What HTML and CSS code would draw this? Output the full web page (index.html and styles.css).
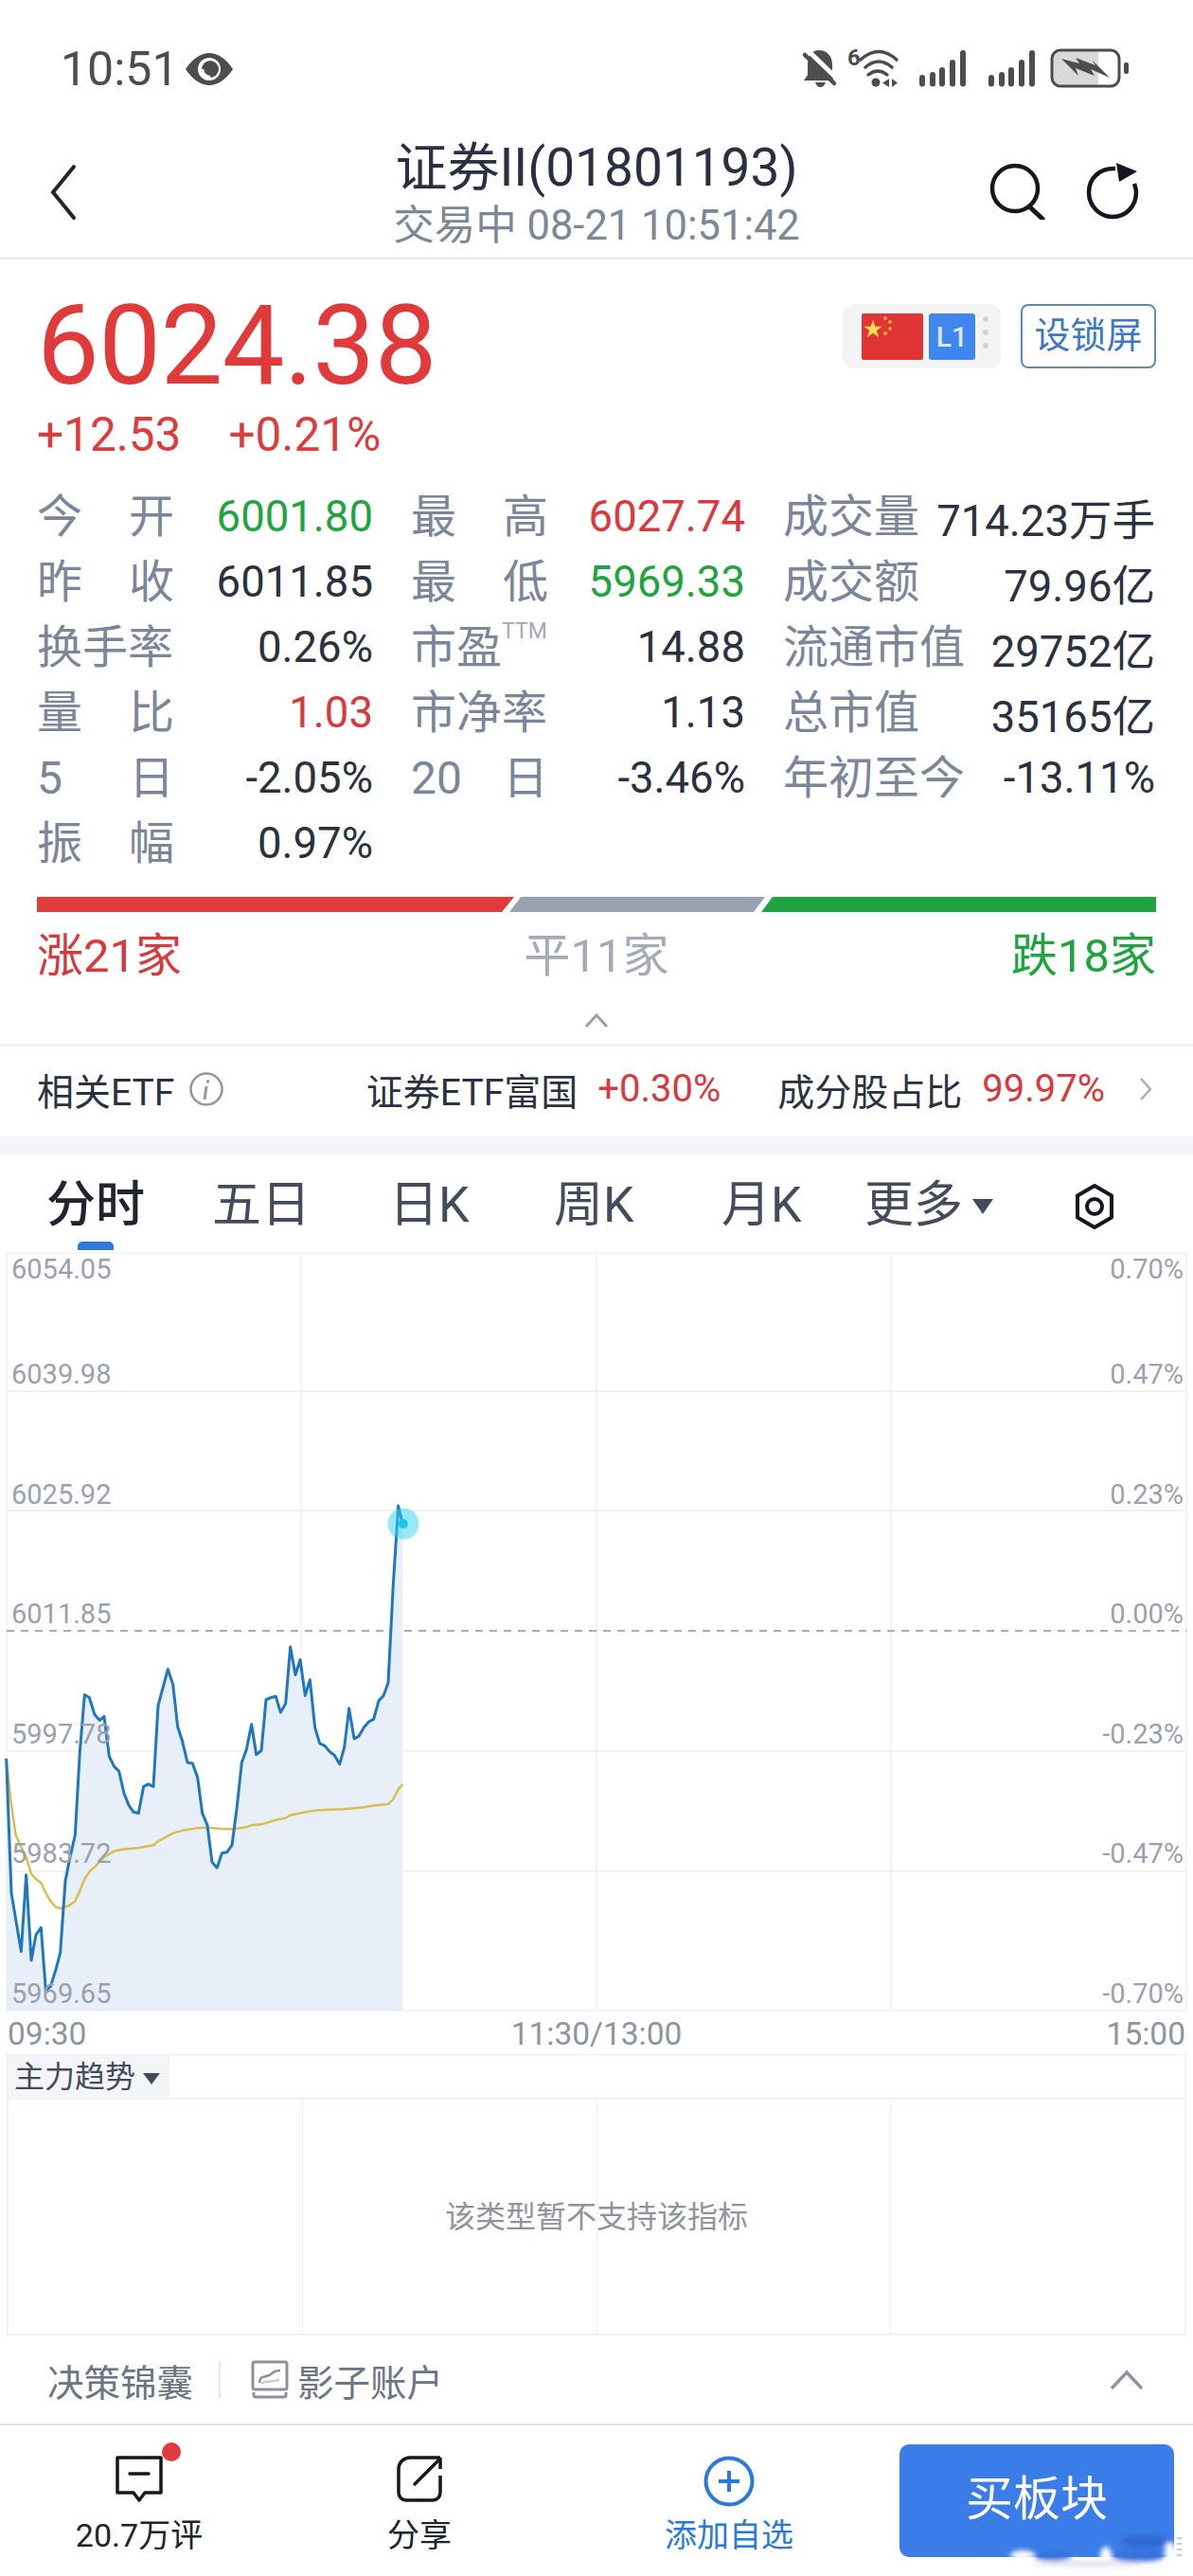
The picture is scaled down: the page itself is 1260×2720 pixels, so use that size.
FILE: index.html
```html
<!DOCTYPE html>
<html lang="zh-CN">
<head>
    <meta charset="UTF-8">
    <title>证券II(01801193)</title>
    <link rel="stylesheet" href="styles.css">
</head>
<body>
    <div class="status">
        <div class="status-left">
            <span class="clock">10:51</span>
            <svg class="eye" width="52" height="36" viewBox="0 0 52 36"><path d="M1 18C9 6 18 1 26 1s17 5 25 17c-8 12-17 17-25 17S9 30 1 18z" fill="#4d4d4d"/><circle cx="26" cy="18" r="12" fill="#fff"/><circle cx="27" cy="18" r="9" fill="#4d4d4d"/><path d="M19 18a8 8 0 0 0 8 8" stroke="#fff" stroke-width="2.500" fill="none"/></svg>
        </div>
        <svg class="status-right" width="400" height="90" viewBox="0 0 400 90">
            <!-- bell -->
            <path d="M45 33c8 0 14 6 14 15v7l1 10H29l4-6V48c0-9 5-15 12-15z" fill="#4d4d4d"/>
            <path d="M41 67h11c-1 3-3 5-5.500 5s-4.500-2-5.500-5z" fill="#4d4d4d"/>
            <path d="M33 33l32 31" stroke="#fff" stroke-width="5"/>
            <path d="M30 38l31 30" stroke="#4d4d4d" stroke-width="4.500" stroke-linecap="round"/>
            <!-- wifi -->
            <text x="75" y="49" class="wifi-six">6</text>
            <g stroke="#4d4d4d" stroke-width="3.500" fill="none" stroke-linecap="round">
                <path d="M89 43Q108 26 127 43"/>
                <path d="M94 51Q108 39 122 51"/>
                <path d="M97 59Q107 51 117 59"/>
            </g>
            <circle cx="105" cy="67" r="4.500" fill="#4d4d4d"/>
            <path d="M119 63v9l-7-4.500zM122 63l6 4.500-6 4.500z" fill="#4d4d4d"/>
            <!-- signal -->
            <g fill="#4d4d4d">
                <rect x="151" y="59" width="6" height="12.500" rx="3"/><rect x="162" y="56" width="6" height="15.500" rx="3"/><rect x="172" y="51" width="6" height="20.500" rx="3"/><rect x="183" y="43" width="6" height="28.500" rx="3"/><rect x="194" y="33" width="6" height="38.500" rx="3"/>
                <rect x="224" y="59" width="6" height="12.500" rx="3"/><rect x="235" y="56" width="6" height="15.500" rx="3"/><rect x="245" y="51" width="6" height="20.500" rx="3"/><rect x="256" y="43" width="6" height="28.500" rx="3"/><rect x="267" y="33" width="6" height="38.500" rx="3"/>
            </g>
            <!-- battery -->
            <rect x="291" y="33" width="71" height="38" rx="9" fill="#fff"/>
            <path d="M340 34H300a8 8 0 0 0-8 8v20a8 8 0 0 0 8 8h40z" fill="#d9d9d9"/>
            <rect x="291" y="33" width="71" height="38" rx="9" fill="none" stroke="#4d4d4d" stroke-width="3"/>
            <path d="M301 42l19 5-4-6 21 8-4-6 19 19-20-9 4 7-20-8 3 8z" fill="#4d4d4d"/>
            <rect x="367" y="46" width="5" height="12" rx="2" fill="#4d4d4d"/>
        </svg>
    </div>

    <header class="nav">
        <svg class="nav-back" width="36" height="60" viewBox="0 0 36 60"><path d="M30 3L8 30l22 27" stroke="#20242e" stroke-width="4" fill="none" stroke-linecap="round"/></svg>
        <div class="nav-title">
            <div class="nav-name">证券II(01801193)</div>
            <div class="nav-sub">交易中 08-21 10:51:42</div>
        </div>
        <div class="nav-tools">
            <svg width="62" height="60" viewBox="0 0 62 60"><circle cx="29" cy="27" r="24" stroke="#14171f" stroke-width="4.500" fill="none"/><path d="M44 46l14 13" stroke="#14171f" stroke-width="5" stroke-linecap="round"/></svg>
            <svg width="58" height="60" viewBox="0 0 58 60"><path d="M32 6C16 5 4 16 4 31c0 14 11 26 25 26s25-11 25-26c0-3-1-6-2-9" stroke="#14171f" stroke-width="4.500" fill="none"/><path d="M33 0l22 9-19 11z" fill="#14171f"/></svg>
        </div>
    </header>

    <section class="quote">
        <div class="quote-main">
            <div class="price">6024.38</div>
            <div class="quote-btns">
                <div class="flag-box">
                    <svg width="65" height="49" viewBox="0 0 65 49"><rect width="65" height="49" rx="2" fill="#e03535"/><path d="M12 7l2.400 6.800 7.200 0-5.800 4.300 2.200 6.900-6-4.200-6 4.200 2.200-6.900-5.800-4.300 7.200 0z" fill="#fbe04c"/><g fill="#f7c54a"><circle cx="25" cy="5" r="1.800"/><circle cx="30" cy="9" r="1.800"/><circle cx="30" cy="16" r="1.800"/><circle cx="25" cy="21" r="1.800"/></g></svg>
                    <span class="l1">L1</span>
                    <span class="dots"><i></i><i></i><i></i></span>
                </div>
                <div class="lock-btn">设锁屏</div>
            </div>
        </div>
        <div class="change"><span>+12.53</span><span>+0.21%</span></div>

        <div class="stats">
            <div class="stat"><span class="k k2"><b>今</b><b>开</b></span><span class="v up-g">6001.80</span></div>
            <div class="stat"><span class="k k2"><b>最</b><b>高</b></span><span class="v up-r">6027.74</span></div>
            <div class="stat"><span class="k">成交量</span><span class="v">714.23万手</span></div>
            <div class="stat"><span class="k k2"><b>昨</b><b>收</b></span><span class="v">6011.85</span></div>
            <div class="stat"><span class="k k2"><b>最</b><b>低</b></span><span class="v up-g">5969.33</span></div>
            <div class="stat"><span class="k">成交额</span><span class="v">79.96亿</span></div>
            <div class="stat"><span class="k">换手率</span><span class="v">0.26%</span></div>
            <div class="stat"><span class="k">市盈<sup class="ttm">TTM</sup></span><span class="v">14.88</span></div>
            <div class="stat"><span class="k">流通市值</span><span class="v">29752亿</span></div>
            <div class="stat"><span class="k k2"><b>量</b><b>比</b></span><span class="v up-r">1.03</span></div>
            <div class="stat"><span class="k">市净率</span><span class="v">1.13</span></div>
            <div class="stat"><span class="k">总市值</span><span class="v">35165亿</span></div>
            <div class="stat"><span class="k k2"><b>5</b><b>日</b></span><span class="v">-2.05%</span></div>
            <div class="stat"><span class="k k2"><b>20</b><b>日</b></span><span class="v">-3.46%</span></div>
            <div class="stat"><span class="k">年初至今</span><span class="v">-13.11%</span></div>
            <div class="stat"><span class="k k2"><b>振</b><b>幅</b></span><span class="v">0.97%</span></div>
        </div>

        <svg class="breadth" width="1182" height="16" viewBox="0 0 1182 16">
            <polygon points="0,0 504,0 491,16 0,16" fill="#e03a3a"/>
            <polygon points="511,0 769,0 757,16 499,16" fill="#99a2b3"/>
            <polygon points="777,0 1182,0 1182,16 765,16" fill="#1fa53f"/>
        </svg>
        <div class="breadth-txt"><span class="up-r">涨21家</span><span class="flat">平11家</span><span class="up-g">跌18家</span></div>
        <svg class="fold" width="26" height="16" viewBox="0 0 26 16"><path d="M2 14L13 2l11 12" stroke="#9aa1ae" stroke-width="3" fill="none"/></svg>
    </section>

    <section class="etf">
        <div class="etf-left">
            <span>相关ETF</span>
            <svg width="38" height="38" viewBox="0 0 38 38"><circle cx="19" cy="19" r="16.500" stroke="#9097a5" stroke-width="2.500" fill="none"/><path d="M20.500 9.500v3M19 16l-2 14" stroke="#9097a5" stroke-width="3" fill="none"/></svg>
        </div>
        <div class="etf-right">
            <span>证券ETF富国</span><span class="up-r etf-pct">+0.30%</span>
            <span class="etf-share">成分股占比</span><span class="up-r etf-pct">99.97%</span>
            <svg class="etf-arrow" width="14" height="26" viewBox="0 0 14 26"><path d="M2 2l10 11L2 24" stroke="#a8aeb9" stroke-width="2.500" fill="none"/></svg>
        </div>
    </section>

    <div class="gap"></div>

    <nav class="tabs">
        <span class="tab active">分时</span>
        <span class="tab">五日</span>
        <span class="tab">日K</span>
        <span class="tab">周K</span>
        <span class="tab">月K</span>
        <span class="tab">更多<i class="tri"></i></span>
        <svg class="tab-gear" width="44" height="50" viewBox="0 0 44 50"><path d="M22 3l18 10.500v23L22 47 4 36.500v-23z" stroke="#14171f" stroke-width="4" fill="none" stroke-linejoin="round"/><circle cx="22" cy="25" r="8" stroke="#14171f" stroke-width="4" fill="none"/></svg>
    </nav>

    <svg class="chart" width="1260" height="848" viewBox="0 0 1260 848">
        <g stroke="#f0f1f3" stroke-width="2" fill="none">
            <rect x="7" y="1" width="1246" height="800" stroke-width="1.500"/>
            <path d="M7 147H1253M7 273H1253M7 527H1253M7 654H1253"/>
        </g>
        <path d="M318 0V801M630 0V801M941 0V801" stroke="#f0f1f4" stroke-width="1.500"/>
        <path d="M7 400H1253" stroke="#a9adb5" stroke-width="2" stroke-dasharray="8 7"/>

        <!-- day line, traced at zoom scale -->
        <g transform="translate(0 178) scale(.33333 .42088)" fill="none">
            <path fill="#e9eff8" stroke="none" d="M20 1480V848L36 1185 67 1332 83 1140 99 1354 114 1290 130 1272 145 1430 160 1420 176 1380 191 1335 207 1155 222 1095 238 1040 253 830 268 688 283 695 300 738 316 752 330 742 346 842 362 868 377 880 393 935 408 965 423 982 439 985 455 918 470 912 486 918 501 715 532 624 548 662 563 768 578 805 594 858 610 860 626 895 641 985 657 1015 672 1108 688 1122 703 1085 719 1083 735 1065 750 975 766 858 781 825 797 762 812 838 828 828 843 700 858 695 874 692 889 732 905 710 920 568 936 638 951 600 967 690 982 650 998 770 1013 810 1029 816 1044 830 1060 840 1076 862 1091 820 1106 722 1122 798 1137 792 1153 770 1168 756 1184 749 1200 703 1215 690 1230 658 1246 410 1262 214 1276 260V1480Z"/>
            <path class="avg" d="M20 848L35 960 50 1040 67 1070 83 1095 99 1138 114 1150 130 1160 145 1185 160 1205 176 1220 191 1224 207 1220 222 1215 238 1205 253 1180 268 1150 285 1130 300 1120 330 1095 362 1080 393 1075 439 1072 486 1065 501 1055 548 1035 580 1028 626 1022 657 1021 700 1024 735 1025 781 1020 797 1015 828 1013 874 1002 905 997 920 990 951 985 998 978 1044 976 1091 975 1153 970 1184 966 1230 962 1246 950 1262 925 1276 912"/>
            <path class="day" d="M20 848L36 1185 67 1332 83 1140 99 1354 114 1290 130 1272 145 1430 160 1420 176 1380 191 1335 207 1155 222 1095 238 1040 253 830 268 688 283 695 300 738 316 752 330 742 346 842 362 868 377 880 393 935 408 965 423 982 439 985 455 918 470 912 486 918 501 715 532 624 548 662 563 768 578 805 594 858 610 860 626 895 641 985 657 1015 672 1108 688 1122 703 1085 719 1083 735 1065 750 975 766 858 781 825 797 762 812 838 828 828 843 700 858 695 874 692 889 732 905 710 920 568 936 638 951 600 967 690 982 650 998 770 1013 810 1029 816 1044 830 1060 840 1076 862 1091 820 1106 722 1122 798 1137 792 1153 770 1168 756 1184 749 1200 703 1215 690 1230 658 1246 410 1262 214 1276 260"/>
        </g>
        <circle cx="426" cy="287" r="16.500" fill="#2ed6f0" opacity=".5"/>
        <circle cx="426" cy="287" r="5" fill="#18c6ea"/>

        <g class="axis">
            <text x="12" y="28">6054.05</text>
            <text x="12" y="139">6039.98</text>
            <text x="12" y="266">6025.92</text>
            <text x="12" y="392">6011.85</text>
            <text x="12" y="519">5997.78</text>
            <text x="12" y="645">5983.72</text>
            <text x="12" y="793">5969.65</text>
            <g text-anchor="end">
                <text x="1250" y="28">0.70%</text>
                <text x="1250" y="139">0.47%</text>
                <text x="1250" y="266">0.23%</text>
                <text x="1250" y="392">0.00%</text>
                <text x="1250" y="519">-0.23%</text>
                <text x="1250" y="645">-0.47%</text>
                <text x="1250" y="793">-0.70%</text>
            </g>
        </g>
        <g class="axis-time">
            <text x="8" y="837">09:30</text>
            <text x="630" y="837" text-anchor="middle">11:30/13:00</text>
            <text x="1252" y="837" text-anchor="end">15:00</text>
        </g>
    </svg>

    <section class="sub-chart">
        <div class="sub-head"><span class="sub-tag">主力趋势<i class="tri tri-sm"></i></span></div>
        <div class="sub-body">
            <i></i><i></i><i></i><i></i>
            <span class="sub-msg">该类型暂不支持该指标</span>
        </div>
    </section>

    <section class="tools">
        <span>决策锦囊</span>
        <i class="tools-sep"></i>
        <svg class="tools-ico" width="42" height="42" viewBox="0 0 42 42"><rect x="3" y="2" width="36" height="29" rx="2" stroke="#8b919d" stroke-width="3" fill="none"/><path d="M4 34v3a2 2 0 0 0 2 2h30a2 2 0 0 0 2-2v-3" stroke="#8b919d" stroke-width="3" fill="none"/><path d="M10 24c0-9 8-5 12-9 3-3 6-4 10-4" stroke="#8b919d" stroke-width="2.500" fill="none"/><path d="M12 25c6-5 12 0 19-5" stroke="#c9cdd4" stroke-width="2.500" fill="none"/></svg>
        <span>影子账户</span>
        <svg class="tools-up" width="36" height="22" viewBox="0 0 36 22"><path d="M2 20L18 3l16 17" stroke="#8d93a0" stroke-width="3.500" fill="none"/></svg>
    </section>

    <footer class="bar">
        <div class="bar-item">
            <span class="bar-ico">
                <svg width="50" height="50" viewBox="0 0 50 50"><path d="M2 2h46v37H31l-6 8-6-8H2z" stroke="#14171f" stroke-width="3.500" fill="none" stroke-linejoin="round"/><path d="M15 19h20" stroke="#14171f" stroke-width="3.500" stroke-linecap="round"/></svg>
                <i class="badge"></i>
            </span>
            <span>20.7万评</span>
        </div>
        <div class="bar-item">
            <span class="bar-ico">
                <svg width="50" height="50" viewBox="0 0 50 50"><path d="M47 2H16A12 12 0 0 0 3 14v25a8 8 0 0 0 8 8h28a8 8 0 0 0 8-8V21" stroke="#14171f" stroke-width="3.500" fill="none"/><path d="M20 30L46 4" stroke="#14171f" stroke-width="3.500" stroke-linecap="round"/><path d="M47 2v12" stroke="#14171f" stroke-width="3.500"/></svg>
            </span>
            <span>分享</span>
        </div>
        <div class="bar-item bar-add">
            <span class="bar-ico">
                <svg width="54" height="54" viewBox="0 0 54 54"><circle cx="27" cy="27" r="24.500" stroke="#2a7ad9" stroke-width="4" fill="none"/><path d="M27 16v22M16 27h22" stroke="#2a7ad9" stroke-width="4"/></svg>
            </span>
            <span>添加自选</span>
        </div>
        <div class="buy">买板块</div>
    </footer>

    <!-- smeared watermark over the button corner -->
    <svg class="smudge" width="200" height="55" viewBox="0 0 200 55">
        <defs><filter id="soft"><feGaussianBlur stdDeviation="2.500"/></filter></defs>
        <g filter="url(#soft)">
            <ellipse cx="150" cy="18" rx="26" ry="7" fill="#2f6ad2"/>
            <ellipse cx="52" cy="34" rx="20" ry="5" fill="#3572dc"/>
            <ellipse cx="142" cy="34" rx="28" ry="6" fill="#3572dc"/>
            <ellipse cx="108" cy="34" rx="6" ry="10" fill="#fff"/>
            <ellipse cx="20" cy="33" rx="13" ry="5" fill="#fff"/>
            <ellipse cx="176" cy="29" rx="6" ry="10" fill="#fff"/>
            <ellipse cx="90" cy="42" rx="60" ry="3" fill="#dfe2e8"/>
        </g>
        <g fill="#c6c9cf"><rect x="183" y="14" width="5" height="2"/><rect x="183" y="20" width="5" height="2"/><rect x="183" y="26" width="5" height="2"/><rect x="183" y="32" width="5" height="2"/></g>
    </svg>
</body>
</html>
```

FILE: styles.css
```css
* { box-sizing: border-box; }
html, body { margin: 0; padding: 0; }
body {
    position: relative;
    width: 1260px;
    height: 2720px;
    overflow: hidden;
    background: #fff;
    color: #2c3140;
    font-family: Roboto, "Noto Sans CJK SC", sans-serif;
}
svg { display: block; }

.status {
    height: 130px;
    padding: 20px 40px 0 64px;
    display: flex;
    justify-content: space-between;
    align-items: flex-start;
}
.status-left { display: flex; align-items: center; gap: 6px; margin-top: 28px; }
.clock { font-size: 50px; line-height: 50px; color: #4d4d4d; }
.wifi-six { font: bold 24px Roboto, sans-serif; fill: #4d4d4d; }

.nav {
    height: 144px;
    border-bottom: 2px solid #e8e9ec;
    display: grid;
    grid-template-columns: 1fr auto 1fr;
    align-items: flex-start;
    padding: 12px 56px 0 56px;
}
.nav-back { margin-top: 31px; margin-left: -8px; }
.nav-title { text-align: center; }
.nav-name { font-size: 55px; line-height: 70px; color: #2a3042; }
.nav-sub { font-size: 43.500px; line-height: 54px; color: #7e8796; }
.nav-tools { display: flex; gap: 41px; margin-top: 30px; justify-self: end; }

.quote { height: 828px; padding: 0 39px; }
.quote-main { display: flex; justify-content: space-between; align-items: flex-start; height: 157px; }
.price { font-size: 117px; line-height: 130px; color: #e03a3a; margin-top: 26px; letter-spacing: -.5px; }
.quote-btns { display: flex; gap: 21px; margin-top: 47px; }
.flag-box {
    width: 167px;
    height: 68px;
    background: #f4f4f5;
    border-radius: 12px;
    padding: 10px 0 0 20px;
    display: flex;
    gap: 6px;
    align-items: flex-start;
}
.l1 {
    width: 49px;
    height: 49px;
    background: #3f86ee;
    border-radius: 3px;
    color: #dbe8fb;
    font-size: 30px;
    line-height: 49px;
    text-align: center;
    font-weight: 500;
}
.dots { display: flex; flex-direction: column; gap: 8px; margin: 3px 0 0 2px; }
.dots i { width: 6px; height: 6px; border-radius: 50%; background: #d3d4d8; }
.lock-btn {
    width: 143px;
    height: 68px;
    border: 2px solid #5f8bb8;
    border-radius: 8px;
    color: #3d78c4;
    font-size: 38px;
    line-height: 62px;
    text-align: center;
}
.change { display: flex; gap: 50px; font-size: 49.500px; line-height: 56px; color: #e03a3a; height: 80px; }

.stats {
    display: grid;
    grid-template-columns: 355px 353px 393px;
    column-gap: 40px;
    grid-auto-rows: 69px;
    height: 414px;
}
.stat { display: flex; justify-content: space-between; align-items: center; }
.k { width: 145px; font-size: 48px; color: #7c8698; white-space: nowrap; line-height: 69px; position: relative; }
.k b { font-weight: 400; }
.k2 { display: flex; justify-content: space-between; }
.ttm { position: absolute; left: 96px; top: 6px; font-size: 23px; line-height: 24px; color: #a3a9b5; }
.v { font-size: 45.500px; white-space: nowrap; color: #2c3140; }
.up-r, .v.up-r { color: #d9383c; }
.up-g, .v.up-g { color: #1fa53f; }

.breadth { margin-top: 22px; }
.breadth-txt { display: flex; justify-content: space-between; font-size: 49px; line-height: 60px; margin-top: 17px; }
.flat { color: #a5abb6; }
.fold { margin: 30px auto 0; }

.etf {
    height: 98px;
    border-top: 3px solid #f1f2f4;
    padding: 0 39px 6px;
    display: flex;
    justify-content: space-between;
    align-items: center;
    font-size: 39px;
    color: #2c3140;
}
.etf-left { display: flex; align-items: center; gap: 15px; }
.etf-right { display: flex; align-items: center; }
.etf-pct { margin-left: 21px; font-size: 40px; }
.etf-share { margin-left: 60px; }
.etf-arrow { margin-left: 36px; margin-right: 4px; }

.gap { height: 19px; background: #f4f5f8; }

.tabs { height: 103px; position: relative; font-size: 52px; color: #444b5b; }
.tab { position: absolute; top: 19px; line-height: 70px; white-space: nowrap; }
.tab:nth-child(1) { left: 49px; font-weight: 500; color: #20242e; }
.tab:nth-child(2) { left: 224px; }
.tab:nth-child(3) { left: 411px; }
.tab:nth-child(4) { left: 585px; }
.tab:nth-child(5) { left: 762px; }
.tab:nth-child(6) { left: 913px; }
.active::after {
    content: "";
    position: absolute;
    left: 33px;
    bottom: -12px;
    width: 38px;
    height: 9px;
    border-radius: 5px 5px 0 0;
    background: #3079e2;
}
.tri {
    display: inline-block;
    width: 0;
    height: 0;
    margin-left: 10px;
    vertical-align: 8px;
    border: 11px solid transparent;
    border-top: 16px solid #444b5b;
    border-bottom: 0;
}
.tri-sm { border-width: 12px 9px 0; margin-left: 8px; vertical-align: 3px; border-top-color: #444b5b; }
.tab-gear { position: absolute; left: 1134px; top: 30px; }

.chart { height: 848px; }
.day { stroke: #1f78bf; stroke-width: 3; vector-effect: non-scaling-stroke; stroke-linejoin: round; }
.avg { stroke: #d7bf4e; stroke-width: 2.500; vector-effect: non-scaling-stroke; }
.axis text { font-family: Roboto, sans-serif; font-size: 29px; fill: #9aa1ae; }
.axis-time text { font-family: Roboto, sans-serif; font-size: 33.500px; fill: #8d95a3; }

.sub-chart { margin: -1px 7px 0; height: 297px; border: 2px solid #f0f1f3; border-top-width: 1px; }
.sub-head { height: 47px; border-bottom: 2px solid #f0f1f3; }
.sub-tag {
    display: inline-block;
    width: 170px;
    height: 46px;
    padding-left: 6px;
    background: #f4f5f8;
    font-size: 32px;
    line-height: 46px;
    color: #444b5b;
    white-space: nowrap;
}
.sub-body { height: 248px; display: flex; position: relative; }
.sub-body i { flex: 1; border-left: 1.500px solid #f0f1f4; }
.sub-body i:first-child { border-left: 0; }
.sub-msg {
    position: absolute;
    left: 0;
    right: 0;
    top: 102px;
    text-align: center;
    font-size: 32px;
    line-height: 44px;
    color: #8f949c;
}

.tools {
    height: 95px;
    border-bottom: 2px solid #dfe1e5;
    display: flex;
    align-items: center;
    padding: 0 52px 0 50px;
    font-size: 38.500px;
    color: #6d7482;
}
.tools-sep { width: 2px; height: 38px; background: #e3e5e9; margin: 0 31px 0 27px; }
.tools-ico { margin-right: 8px; }
.tools-up { margin-left: auto; }

.bar { height: 159px; position: relative; }
.bar-item {
    position: absolute;
    top: 32px;
    width: 220px;
    display: flex;
    flex-direction: column;
    align-items: center;
    font-size: 34px;
    line-height: 44px;
    color: #20242e;
}
.bar-item:nth-child(1) { left: 37px; }
.bar-item:nth-child(2) { left: 333px; }
.bar-item:nth-child(3) { left: 660px; }
.bar-ico { position: relative; height: 62px; }
.badge {
    position: absolute;
    right: -19px;
    top: -14px;
    width: 20px;
    height: 20px;
    border-radius: 50%;
    background: #e33a3f;
}
.bar-add { color: #2a7ad9; }
.buy {
    position: absolute;
    left: 950px;
    top: 20px;
    width: 290px;
    height: 119px;
    border-radius: 10px;
    background: #3b7de8;
    color: #fff;
    font-size: 50px;
    line-height: 116px;
    text-align: center;
}
.smudge { position: absolute; left: 1060px; top: 2665px; }
```
